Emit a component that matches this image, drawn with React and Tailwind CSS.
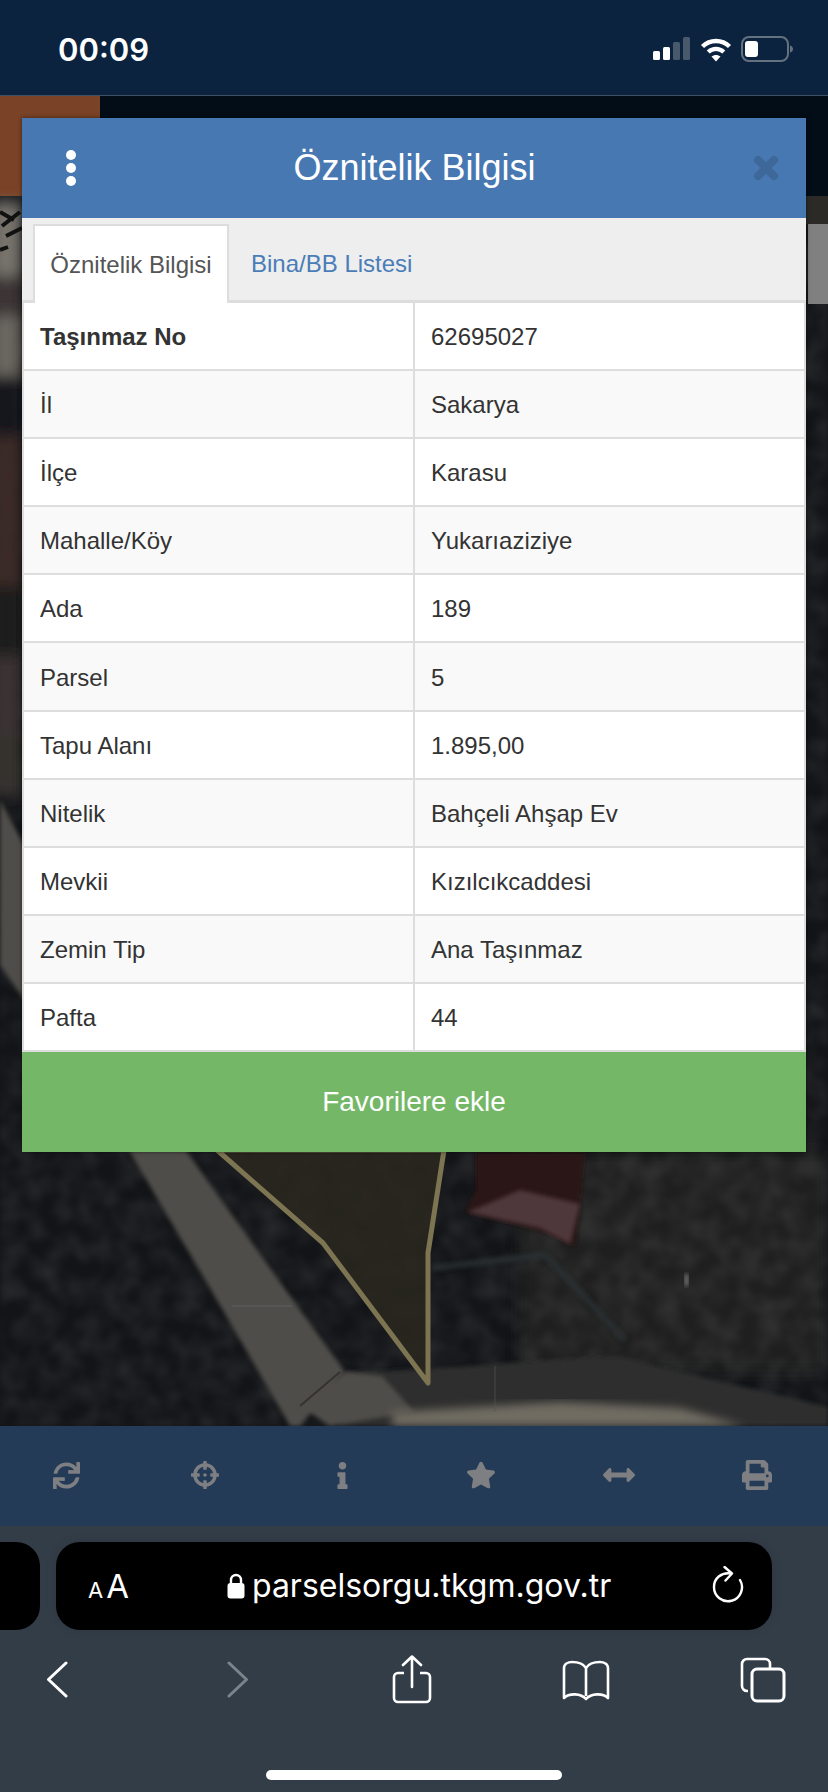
import { FaSync, FaCrosshairs, FaInfo, FaStar, FaArrowsAltH, FaPrint } from "react-icons/fa";

const rows = [
  ["Taşınmaz No", "62695027"],
  ["İl", "Sakarya"],
  ["İlçe", "Karasu"],
  ["Mahalle/Köy", "Yukarıaziziye"],
  ["Ada", "189"],
  ["Parsel", "5"],
  ["Tapu Alanı", "1.895,00"],
  ["Nitelik", "Bahçeli Ahşap Ev"],
  ["Mevkii", "Kızılcıkcaddesi"],
  ["Zemin Tip", "Ana Taşınmaz"],
  ["Pafta", "44"],
];

const tools = [
  { Icon: FaSync, size: 27 },
  { Icon: FaCrosshairs, size: 28 },
  { Icon: FaInfo, size: 27 },
  { Icon: FaStar, size: 30 },
  { Icon: FaArrowsAltH, size: 32 },
  { Icon: FaPrint, size: 30 },
];

// satellite picture behind the modal, y is relative to the top of the map (96)
function MapPicture() {
  return (
    <svg className="absolute inset-0" width="828" height="1330" viewBox="0 96 828 1330">
      <defs>
        <filter id="grain" x="0" y="0" width="100%" height="100%">
          <feTurbulence type="fractalNoise" baseFrequency="0.05" numOctaves="3" seed="7" />
          <feColorMatrix values="0 0 0 0 0.55  0 0 0 0 0.56  0 0 0 0 0.55  1.4 0 0 0 -0.45" />
          <feGaussianBlur stdDeviation="2.5" />
        </filter>
        <filter id="soft"><feGaussianBlur stdDeviation="2" /></filter>
        <filter id="mid"><feGaussianBlur stdDeviation="4" /></filter>
        <filter id="softer"><feGaussianBlur stdDeviation="7" /></filter>
      </defs>
      <rect x="0" y="96" width="828" height="1330" fill="#121417" />
      <rect x="520" y="1152" width="308" height="220" fill="#2a2a26" opacity="0.5" filter="url(#softer)" />
      <rect x="0" y="96" width="828" height="1330" filter="url(#grain)" opacity="0.15" />

      {/* top band */}
      <rect x="0" y="96" width="828" height="100" fill="#020d18" />
      <rect x="0" y="96" width="100" height="100" fill="#7a4226" />
      <rect x="806" y="196" width="22" height="28" fill="#2c2a26" />
      <rect x="808" y="224" width="20" height="80" fill="#808080" />

      {/* left strip */}
      <g filter="url(#softer)">
        <rect x="-10" y="202" width="32" height="74" fill="#77736c" />
        <rect x="-10" y="276" width="32" height="40" fill="#3c3634" />
        <rect x="-10" y="316" width="32" height="60" fill="#6a6660" />
        <rect x="-10" y="376" width="32" height="60" fill="#15181b" />
        <rect x="-10" y="436" width="32" height="150" fill="#3a2c28" />
        <rect x="-10" y="586" width="32" height="70" fill="#1d1c1c" />
        <rect x="-10" y="656" width="32" height="80" fill="#3a3230" />
        <rect x="-10" y="736" width="32" height="60" fill="#34322f" />
      </g>
      <path d="M2 226l18-14M0 212l14 8M6 236l16-8M0 250l8-3" stroke="#111" strokeWidth="4" fill="none" />

      {/* road */}
      <path
        d="M0 800L187 1152L293 1300L345 1372L300 1426L290 1426L275 1400L217 1300L130 1152L0 965Z"
        fill="#4f4d48"
        filter="url(#soft)"
      />
      <path d="M232 1306H292" stroke="#6a6a6e" strokeWidth="1" opacity="0.6" />

      {/* lower road and junction */}
      <path d="M345 1372L414 1370L614 1356L828 1407V1426H340Z" fill="#2d2f2d" filter="url(#soft)" />
      <path d="M345 1372L382 1376L414 1412L330 1426L300 1406Z" fill="#4f4d48" filter="url(#soft)" />
      <path d="M392 1412L560 1402L680 1408L745 1426H392Z" fill="#706c62" filter="url(#mid)" />
      <path d="M340 1372L300 1406" stroke="#2a2824" strokeWidth="2" opacity="0.7" />
      <path d="M495 1366V1412" stroke="#55574f" strokeWidth="1" opacity="0.7" />

      {/* red roof and driveway */}
      <path d="M476 1152H585L575 1246L545 1232L466 1212L476 1190Z" fill="#2a1918" filter="url(#soft)" />
      <path d="M468 1212L520 1190L580 1204L570 1244L540 1228Z" fill="#50373a" filter="url(#soft)" />
      <path d="M432 1268L545 1255L625 1340" stroke="#2a3236" strokeWidth="6" fill="none" filter="url(#soft)" opacity="0.8" />
      <rect x="685" y="1274" width="3" height="12" fill="#8c8e8c" filter="url(#soft)" />

      {/* parcel */}
      <path
        d="M217 1150L323 1243L428 1383L428 1253L444 1150Z"
        fill="#2a281f"
        fillOpacity="0.85"
        stroke="#7d7552"
        strokeWidth="5"
        strokeLinejoin="round"
      />
    </svg>
  );
}

function StatusIcons() {
  return (
    <div className="flex items-center gap-[9px] mr-[34px]">
      <svg width="38" height="24" viewBox="0 0 38 24">
        <rect x="0" y="14" width="7" height="9" rx="1.5" fill="#fff" />
        <rect x="10" y="10" width="7" height="13" rx="1.5" fill="#fff" />
        <rect x="20" y="5" width="7" height="18" rx="1.5" fill="#49596c" />
        <rect x="30" y="0" width="7" height="23" rx="1.5" fill="#49596c" />
      </svg>
      <svg width="32" height="25" viewBox="0 0 32 25">
        <path d="M2.5 9.5C10 2.2 22 2.2 29.5 9.5" stroke="#fff" strokeWidth="4.4" fill="none" />
        <path d="M8.2 15C12.8 10.8 19.2 10.8 23.8 15" stroke="#fff" strokeWidth="4.2" fill="none" />
        <path d="M11.5 19.5C14 17.4 18 17.4 20.5 19.5L16 24.5Z" fill="#fff" />
      </svg>
      <svg width="53" height="26" viewBox="0 0 53 26">
        <rect x="1" y="1" width="46" height="24" rx="7" fill="none" stroke="#64727f" strokeWidth="2" />
        <rect x="4" y="5" width="13" height="16" rx="3" fill="#fff" />
        <path d="M49 9.5C51 10 52 11.5 52 13C52 14.5 51 16 49 16.5Z" fill="#64727f" />
      </svg>
    </div>
  );
}

function SafariIcons() {
  const line = "#fff";
  return (
    <div className="flex items-start h-[50px] mt-[25px]">
      <svg className="ml-[46px] mt-[6px]" width="22" height="37" viewBox="0 0 22 37">
        <path d="M20 2L2.5 18.5L20 35" stroke={line} strokeWidth="3" fill="none" strokeLinecap="round" strokeLinejoin="round" />
      </svg>
      <svg className="ml-[159px] mt-[6px]" width="22" height="37" viewBox="0 0 22 37">
        <path d="M2 2L19.5 18.5L2 35" stroke="#7b838b" strokeWidth="3" fill="none" strokeLinecap="round" strokeLinejoin="round" />
      </svg>
      <svg className="ml-[143px]" width="40" height="49" viewBox="0 0 40 49">
        <path d="M12 18H6a4 4 0 0 0-4 4V43a4 4 0 0 0 4 4H34a4 4 0 0 0 4-4V22a4 4 0 0 0-4-4H28" stroke={line} strokeWidth="2.6" fill="none" />
        <path d="M20 32V2M11 10L20 1.5L29 10" stroke={line} strokeWidth="2.6" fill="none" strokeLinecap="round" strokeLinejoin="round" />
      </svg>
      <svg className="ml-[129px] mt-[5px]" width="50" height="41" viewBox="0 0 50 41">
        <path d="M25 8C22 3 16 2 11 2C7 2 3 4 3 8V38C8 33 20 33 25 39C30 33 42 33 47 38V8C47 4 43 2 39 2C34 2 28 3 25 8ZM25 8V36" stroke={line} strokeWidth="2.6" fill="none" strokeLinejoin="round" />
      </svg>
      <svg className="ml-[129px] mt-[2px]" width="46" height="46" viewBox="0 0 46 46">
        <path d="M8 34H7a5 5 0 0 1-5-5V7a5 5 0 0 1 5-5H25a5 5 0 0 1 5 5V12" stroke={line} strokeWidth="2.6" fill="none" />
        <rect x="12" y="12" width="32" height="32" rx="5" stroke={line} strokeWidth="3" fill="none" />
      </svg>
    </div>
  );
}

export default function App() {
  return (
    <div className="w-[828px] h-[1792px] flex flex-col overflow-hidden bg-[#333d48] font-['Liberation_Sans',Arial,sans-serif]">
      {/* status bar */}
      <div className="h-[96px] shrink-0 flex items-center justify-between bg-[#0c2340] border-b border-[#3d4f63] pt-[3px]">
        <span className="ml-[58px] text-[31px] leading-none font-semibold text-white font-['Inter',sans-serif]">00:09</span>
        <StatusIcons />
      </div>

      {/* map + modal */}
      <div className="relative flex-1">
        <MapPicture />
        <div className="absolute left-[22px] top-[22px] w-[784px] shadow-[0_0_4px_rgba(0,0,0,0.5)]">
          <div className="h-[100px] flex items-center justify-between bg-[#4778b2] pl-[44px] pr-[27px]">
            <div className="flex flex-col gap-[3px]">
              <span className="w-[10px] h-[10px] rounded-full bg-white" />
              <span className="w-[10px] h-[10px] rounded-full bg-white" />
              <span className="w-[10px] h-[10px] rounded-full bg-white" />
            </div>
            <span className="text-[36px] leading-none text-white">Öznitelik Bilgisi</span>
            <svg width="26" height="26" viewBox="0 0 26 26">
              <path d="M5 5L21 21M21 5L5 21" stroke="#3d6899" strokeWidth="8" strokeLinecap="round" />
            </svg>
          </div>

          <div className="h-[85px] flex items-end bg-[#eeeeee] border-b-[3px] border-[#dddddd] pl-[11px]">
            <div className="h-[79px] w-[196px] -mb-[3px] flex items-center justify-center bg-white border-2 border-b-0 border-[#dddddd] text-[24px] text-[#555555]">
              Öznitelik Bilgisi
            </div>
            <div className="h-[79px] -mb-[3px] ml-[22px] flex items-center text-[24px] text-[#4a7db8]">Bina/BB Listesi</div>
          </div>

          <div className="bg-white">
            {rows.map((row, i) => (
              <div
                key={row[0]}
                className={`grid grid-cols-[391px_1fr] h-[68.1px] border-b-2 border-x-2 border-[#dddddd] text-[24px] text-[#333333] ${i % 2 === 1 ? "bg-[#f9f9f9]" : "bg-white"}`}
              >
                <div className={`flex items-center pt-[2px] pl-[16px] border-r-2 border-[#dddddd] ${i === 0 ? "font-bold" : ""}`}>{row[0]}</div>
                <div className="flex items-center pt-[2px] pl-[16px]">{row[1]}</div>
              </div>
            ))}
          </div>

          <div className="h-[100px] flex items-center justify-center bg-[#74b767] text-[28px] text-white">Favorilere ekle</div>
        </div>
      </div>

      {/* page toolbar */}
      <div className="h-[100px] shrink-0 grid grid-cols-6 bg-[#243b58]">
        {tools.map(({ Icon, size }, i) => (
          <div key={i} className="flex items-center justify-center pb-[2px] pr-[5px] text-[#7d7f82]">
            <Icon size={size} />
          </div>
        ))}
      </div>

      {/* safari bar */}
      <div className="h-[266px] shrink-0 bg-[#333d48]">
        <div className="flex gap-[16px] pt-[16px]">
          <div className="w-[40px] h-[88px] rounded-r-[24px] bg-black" />
          <div className="relative w-[716px] h-[88px] rounded-[24px] bg-black flex items-center text-white shadow-[0_0_12px_rgba(0,0,0,0.12)]">
            <span className="ml-[32px] flex items-baseline font-['Inter',sans-serif] leading-none">
              <span className="text-[22px]">A</span>
              <span className="text-[33px] ml-[3px]">A</span>
            </span>
            <svg className="ml-[98px]" width="18" height="26" viewBox="0 0 18 26">
              <path d="M4 11V7a5 5 0 0 1 10 0v4" stroke="#fff" strokeWidth="2.4" fill="none" />
              <rect x="0.5" y="10" width="17" height="15.5" rx="3" fill="#fff" />
            </svg>
            <span className="ml-[7px] text-[32px] leading-none font-['Inter',sans-serif]">parselsorgu.tkgm.gov.tr</span>
            <svg className="absolute left-[656px] top-[24px]" width="32" height="38" viewBox="0 0 32 38">
              <path d="M19 7.5C9 6 2 12.5 2 21a14 14 0 1 0 26-7" stroke="#fff" strokeWidth="2.4" fill="none" strokeLinecap="round" />
              <path d="M12.5 1L20 7.5L13.5 14.5" stroke="#fff" strokeWidth="2.4" fill="none" strokeLinecap="round" strokeLinejoin="round" />
            </svg>
          </div>
        </div>
        <SafariIcons />
        <div className="w-[296px] h-[10px] rounded-full bg-white mx-auto mt-[65px]" />
      </div>
    </div>
  );
}
